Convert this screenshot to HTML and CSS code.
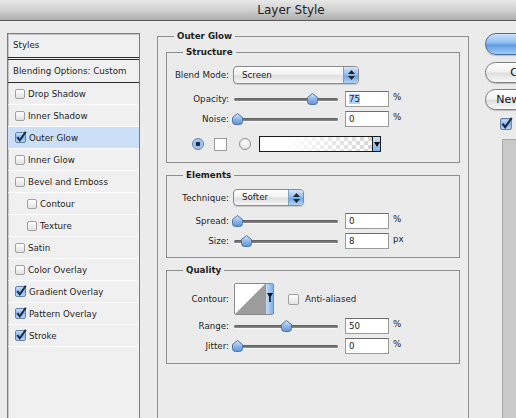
FILE: index.html
```html
<!DOCTYPE html>
<html lang="en">
<head>
    <meta charset="UTF-8">
    <title>Layer Style</title>
    <link rel="stylesheet" href="styles.css">
</head>
<body>

    <svg class="defs" width="0" height="0">
        <defs>
            <linearGradient id="thumbGrad" x1="0" y1="0" x2="0" y2="1">
                <stop offset="0" stop-color="#dbe9fa"/>
                <stop offset="0.5" stop-color="#8fb8ea"/>
                <stop offset="1" stop-color="#5d94d8"/>
            </linearGradient>
            <linearGradient id="cbOn" x1="0" y1="0" x2="0" y2="1">
                <stop offset="0" stop-color="#cfe3fa"/>
                <stop offset="0.5" stop-color="#8ab8ec"/>
                <stop offset="1" stop-color="#b9d6f6"/>
            </linearGradient>
        </defs>
    </svg>

    <div class="window">
        <div class="titlebar">Layer Style</div>

        <div class="content">
            <!-- left: list of styles -->
            <div class="styles-list">
                <div class="list-head">Styles</div>
                <div class="list-blend">Blending Options: Custom</div>
                <div class="list-item"><span class="box"></span>Drop Shadow</div>
                <div class="list-item"><span class="box"></span>Inner Shadow</div>
                <div class="list-item active">
                    <svg class="check" width="12" height="12" viewBox="0 0 12 12"><rect x=".5" y="1.5" width="10" height="10" rx="1.5" fill="url(#cbOn)" stroke="#6582a8"/><path d="M2.3 6.2 L4.8 9.4 L10.8 .8" fill="none" stroke="#1b2b47" stroke-width="2"/></svg>Outer Glow
                </div>
                <div class="list-item"><span class="box"></span>Inner Glow</div>
                <div class="list-item"><span class="box"></span>Bevel and Emboss</div>
                <div class="list-item sub"><span class="box"></span>Contour</div>
                <div class="list-item sub"><span class="box"></span>Texture</div>
                <div class="list-item"><span class="box"></span>Satin</div>
                <div class="list-item"><span class="box"></span>Color Overlay</div>
                <div class="list-item">
                    <svg class="check" width="12" height="12" viewBox="0 0 12 12"><rect x=".5" y="1.5" width="10" height="10" rx="1.5" fill="url(#cbOn)" stroke="#6582a8"/><path d="M2.3 6.2 L4.8 9.4 L10.8 .8" fill="none" stroke="#1b2b47" stroke-width="2"/></svg>Gradient Overlay
                </div>
                <div class="list-item">
                    <svg class="check" width="12" height="12" viewBox="0 0 12 12"><rect x=".5" y="1.5" width="10" height="10" rx="1.5" fill="url(#cbOn)" stroke="#6582a8"/><path d="M2.3 6.2 L4.8 9.4 L10.8 .8" fill="none" stroke="#1b2b47" stroke-width="2"/></svg>Pattern Overlay
                </div>
                <div class="list-item">
                    <svg class="check" width="12" height="12" viewBox="0 0 12 12"><rect x=".5" y="1.5" width="10" height="10" rx="1.5" fill="url(#cbOn)" stroke="#6582a8"/><path d="M2.3 6.2 L4.8 9.4 L10.8 .8" fill="none" stroke="#1b2b47" stroke-width="2"/></svg>Stroke
                </div>
            </div>

            <!-- middle: outer glow settings -->
            <div class="panel">
                <fieldset class="group outer">
                    <legend>Outer Glow</legend>

                    <fieldset class="group structure">
                        <legend>Structure</legend>
                        <div class="row tall first">
                            <span class="label">Blend Mode:</span>
                            <div class="popup blend">Screen
                                <span class="popup-arrows"><svg width="7" height="10" viewBox="0 0 7 10"><path d="M3.5 0 L7 4 H0 Z M0 6 H7 L3.5 10 Z" fill="#1d2633"/></svg></span>
                            </div>
                        </div>
                        <div class="row gap7">
                            <span class="label">Opacity:</span>
                            <div class="slider">
                                <span class="track"></span>
                                <svg class="thumb" style="left: 74px" width="11" height="12" viewBox="0 0 11 12"><path d="M5.5 .5 L10.5 4.5 V8.5 A3 3 0 0 1 7.5 11.5 H3.5 A3 3 0 0 1 .5 8.5 V4.5 Z" fill="url(#thumbGrad)" stroke="#4d74a4"/></svg>
                            </div>
                            <span class="field"><span class="selected">75</span></span>
                            <span class="unit">%</span>
                        </div>
                        <div class="row gap4">
                            <span class="label">Noise:</span>
                            <div class="slider">
                                <span class="track"></span>
                                <svg class="thumb" style="left: -1px" width="11" height="12" viewBox="0 0 11 12"><path d="M5.5 .5 L10.5 4.5 V8.5 A3 3 0 0 1 7.5 11.5 H3.5 A3 3 0 0 1 .5 8.5 V4.5 Z" fill="url(#thumbGrad)" stroke="#4d74a4"/></svg>
                            </div>
                            <span class="field">0</span>
                            <span class="unit">%</span>
                        </div>
                        <div class="row color-row">
                            <span class="radio on"></span>
                            <span class="swatch"></span>
                            <span class="radio"></span>
                            <span class="gradient">
                                <span class="gradient-fill"></span>
                                <span class="gradient-arrow"><svg width="6" height="5" viewBox="0 0 6 5"><path d="M0 0 H6 L3 5 Z" fill="#111"/></svg></span>
                            </span>
                        </div>
                    </fieldset>

                    <fieldset class="group elements">
                        <legend>Elements</legend>
                        <div class="row tall first">
                            <span class="label">Technique:</span>
                            <div class="popup technique">Softer
                                <span class="popup-arrows"><svg width="7" height="10" viewBox="0 0 7 10"><path d="M3.5 0 L7 4 H0 Z M0 6 H7 L3.5 10 Z" fill="#1d2633"/></svg></span>
                            </div>
                        </div>
                        <div class="row gap7">
                            <span class="label">Spread:</span>
                            <div class="slider">
                                <span class="track"></span>
                                <svg class="thumb" style="left: -1px" width="11" height="12" viewBox="0 0 11 12"><path d="M5.5 .5 L10.5 4.5 V8.5 A3 3 0 0 1 7.5 11.5 H3.5 A3 3 0 0 1 .5 8.5 V4.5 Z" fill="url(#thumbGrad)" stroke="#4d74a4"/></svg>
                            </div>
                            <span class="field">0</span>
                            <span class="unit">%</span>
                        </div>
                        <div class="row gap4">
                            <span class="label">Size:</span>
                            <div class="slider">
                                <span class="track"></span>
                                <svg class="thumb" style="left: 8px" width="11" height="12" viewBox="0 0 11 12"><path d="M5.5 .5 L10.5 4.5 V8.5 A3 3 0 0 1 7.5 11.5 H3.5 A3 3 0 0 1 .5 8.5 V4.5 Z" fill="url(#thumbGrad)" stroke="#4d74a4"/></svg>
                            </div>
                            <span class="field">8</span>
                            <span class="unit">px</span>
                        </div>
                    </fieldset>

                    <fieldset class="group quality">
                        <legend>Quality</legend>
                        <div class="row contour-row">
                            <span class="label">Contour:</span>
                            <span class="contour">
                                <svg class="contour-curve" width="30" height="30" viewBox="0 0 30 30"><rect width="30" height="30" fill="#fff"/><path d="M0 30 L30 0 V30 Z" fill="#9c9c9c"/></svg>
                                <span class="contour-arrow"><svg width="6" height="9" viewBox="0 0 6 9"><path d="M0 0 H6 L3 5 Z M2.2 3 H3.8 V9 H2.2 Z" fill="#111"/></svg></span>
                            </span>
                            <span class="box anti"></span>
                            <span class="anti-label">Anti-aliased</span>
                        </div>
                        <div class="row gap3">
                            <span class="label">Range:</span>
                            <div class="slider">
                                <span class="track"></span>
                                <svg class="thumb" style="left: 48px" width="11" height="12" viewBox="0 0 11 12"><path d="M5.5 .5 L10.5 4.5 V8.5 A3 3 0 0 1 7.5 11.5 H3.5 A3 3 0 0 1 .5 8.5 V4.5 Z" fill="url(#thumbGrad)" stroke="#4d74a4"/></svg>
                            </div>
                            <span class="field">50</span>
                            <span class="unit">%</span>
                        </div>
                        <div class="row gap4">
                            <span class="label">Jitter:</span>
                            <div class="slider">
                                <span class="track"></span>
                                <svg class="thumb" style="left: -1px" width="11" height="12" viewBox="0 0 11 12"><path d="M5.5 .5 L10.5 4.5 V8.5 A3 3 0 0 1 7.5 11.5 H3.5 A3 3 0 0 1 .5 8.5 V4.5 Z" fill="url(#thumbGrad)" stroke="#4d74a4"/></svg>
                            </div>
                            <span class="field">0</span>
                            <span class="unit">%</span>
                        </div>
                    </fieldset>
                </fieldset>
            </div>

            <!-- right: buttons and preview -->
            <div class="actions">
                <button class="btn default">OK</button>
                <button class="btn cancel">Cancel</button>
                <button class="btn new-style">New Style...</button>
                <div class="preview-row">
                    <svg class="check" width="13" height="13" viewBox="0 0 12 12"><rect x=".5" y="1.5" width="10" height="10" rx="1.5" fill="url(#cbOn)" stroke="#6582a8"/><path d="M2.3 6.2 L4.8 9.4 L10.8 .8" fill="none" stroke="#1b2b47" stroke-width="2"/></svg>
                    <span>Preview</span>
                </div>
                <div class="preview-box"></div>
            </div>
        </div>
    </div>

</body>
</html>
```

FILE: styles.css
```css
* {
    box-sizing: border-box;
}
body {
    margin: 0;
    background: #ebebeb;
    font-family: "DejaVu Sans", sans-serif;
    font-size: 8.7px;
    color: #1e1e1e;
    overflow: hidden;
}
.defs {
    position: absolute;
}
.window {
    width: 582px;
    height: 418px;
}
.titlebar {
    height: 21px;
    background: linear-gradient(#e8e8e8, #cdcdcd 55%, #adadad);
    border-bottom: 1px solid #575757;
    text-align: center;
    font-size: 12px;
    line-height: 20px;
    color: #222;
}
.content {
    display: flex;
    align-items: flex-start;
}

/* styles list */
.styles-list {
    flex: none;
    width: 133px;
    height: 400px;
    margin: 12px 0 0 7px;
    background: #f0f0f0;
    border: 1px solid #7d7d7d;
    box-shadow: inset 1px 1px 0 #c6c6c6;
    white-space: nowrap;
}
.list-head {
    height: 26px;
    line-height: 23px;
    padding-left: 5px;
    border-bottom: 3px double #2b2b2b;
}
.list-blend {
    height: 23px;
    line-height: 22px;
    padding-left: 5px;
    border-bottom: 1px solid #2b2b2b;
}
.list-item {
    height: 22px;
    display: flex;
    align-items: center;
    gap: 3px;
    padding-left: 7px;
    border-bottom: 1px solid #fbfbfb;
}
.list-item.sub {
    padding-left: 19px;
}
.list-item.active {
    background: #cadff7;
}
.list-item .check {
    margin-top: -2px;
    margin-right: -1px;
}
.box {
    flex: none;
    width: 10px;
    height: 10px;
    border: 1px solid #a0a0a0;
    border-radius: 2px;
    background: linear-gradient(#ffffff, #e2e2e2);
}

/* settings panel */
.panel {
    flex: none;
    width: 312px;
    margin: 9px 0 0 17px;
}
.group {
    margin: 0;
    padding: 0 8px;
    border: 1px solid #8e8e8e;
    min-width: 0;
}
.group legend {
    margin-left: 8px;
    padding: 0 3px;
    font-weight: bold;
    line-height: 12px;
}
.outer {
    height: 400px;
}
.structure {
    margin-top: 4px;
    padding-bottom: 10px;
}
.elements {
    margin-top: 6px;
    padding-bottom: 8px;
}
.quality {
    margin-top: 6px;
    padding-bottom: 9px;
}
.row {
    display: flex;
    align-items: center;
    height: 16px;
    white-space: nowrap;
}
.row.first {
    margin-top: 8px;
}
.row.tall {
    height: 18px;
}
.elements .row.tall {
    height: 17px;
}
.gap3 {
    margin-top: 3px;
}
.gap4 {
    margin-top: 4px;
}
.gap7 {
    margin-top: 7px;
}
.label {
    flex: none;
    width: 54px;
    margin-right: 4px;
    display: flex;
    justify-content: flex-end;
}

/* popup menus */
.popup {
    position: relative;
    height: 100%;
    padding-left: 8px;
    line-height: 16px;
    border: 1px solid #8a8a8a;
    border-radius: 4px;
    background: linear-gradient(#ffffff, #f1f1f1 45%, #dedede 55%, #f6f6f6);
    box-shadow: 0 1px 1px rgba(0, 0, 0, 0.15);
}
.popup.blend {
    width: 126px;
}
.popup.technique {
    width: 71px;
    line-height: 15px;
}
.popup-arrows {
    position: absolute;
    top: 0;
    right: 0;
    bottom: 0;
    width: 15px;
    display: flex;
    align-items: center;
    justify-content: center;
    border-radius: 0 3px 3px 0;
    border-left: 1px solid #7e9fc8;
    background: linear-gradient(#d3e5fa, #8fbbec 50%, #6fa5e4 55%, #b4d4f6);
}

/* sliders and fields */
.slider {
    position: relative;
    flex: none;
    width: 112px;
    height: 100%;
}
.track {
    position: absolute;
    left: 1px;
    width: 104px;
    top: 7px;
    height: 3px;
    border-radius: 2px;
    background: linear-gradient(#5b5b5b, #8c8c8c);
    box-shadow: 0 1px 0 #f8f8f8;
}
.thumb {
    position: absolute;
    top: 2px;
}
.field {
    flex: none;
    width: 44px;
    height: 16px;
    padding-left: 3px;
    line-height: 14px;
    background: #fff;
    border: 1px solid #9a9a9a;
    border-top-color: #6d6d6d;
}
.selected {
    background: #b3d4fc;
}
.unit {
    align-self: flex-start;
    margin-left: 4px;
    line-height: 12px;
}

/* color row */
.color-row {
    margin-top: 9px;
    padding-left: 17px;
}
.radio {
    flex: none;
    width: 12px;
    height: 12px;
    border: 1px solid #8f8f8f;
    border-radius: 50%;
    background: radial-gradient(circle at 50% 30%, #ffffff, #dcdcdc);
}
.radio.on {
    background: radial-gradient(circle, #1d2a3e 0 2px, #8fb9ec 2.5px, #cfe2f9);
    border-color: #5f7fa7;
}
.swatch {
    flex: none;
    width: 13px;
    height: 13px;
    margin: 0 12px 0 10px;
    background: #fff;
    border: 1px solid #9a9a9a;
}
.gradient {
    display: flex;
    width: 122px;
    height: 16px;
    margin-left: 8px;
    border: 1px solid #1a1a1a;
}
.gradient-fill {
    flex: 1;
    background: linear-gradient(to right, #fff 20%, rgba(255, 255, 255, 0)),
        repeating-conic-gradient(#d6d6d6 0 25%, #fff 0 50%) 0 0 / 8px 8px;
}
.gradient-arrow {
    width: 8px;
    display: flex;
    align-items: center;
    justify-content: center;
    border-left: 1px solid #1a1a1a;
    background: linear-gradient(#cfe2f9, #7fb0e8);
}

/* contour row */
.contour-row {
    height: 32px;
    margin-top: 7px;
}
.contour-row .label {
    margin-right: 5px;
}
.contour {
    display: flex;
    width: 40px;
    height: 32px;
    border: 1px solid #8a8a8a;
    border-radius: 2px;
}
.contour-curve {
    display: block;
}
.contour-arrow {
    flex: 1;
    display: flex;
    justify-content: center;
    padding-top: 9px;
    border-left: 1px solid #7e9fc8;
    background: linear-gradient(to right, #c3dbf7, #7fb0e8);
}
.box.anti {
    width: 11px;
    height: 11px;
    margin: 0 6px 0 14px;
}

/* buttons */
.actions {
    flex: none;
    width: 90px;
    margin: 12px 0 0 16px;
    display: flex;
    flex-direction: column;
    align-items: flex-start;
}
.btn {
    width: 88px;
    height: 21px;
    padding: 0;
    font-family: inherit;
    font-size: 11px;
    color: #111;
    border: 1px solid #7f7f7f;
    border-radius: 11px;
    background: linear-gradient(#ffffff, #f2f2f2 45%, #dfdfdf 55%, #f8f8f8);
    box-shadow: 0 1px 1px rgba(0, 0, 0, 0.2);
}
.btn.default {
    height: 22px;
    border-color: #4a6e9e;
    background: linear-gradient(#cde2fa, #8ebcef 45%, #5e9be3 55%, #a4cdf5);
}
.btn.cancel {
    margin-top: 7px;
}
.btn.new-style {
    margin-top: 6px;
}
.preview-row {
    display: flex;
    align-items: center;
    gap: 4px;
    margin: 7px 0 0 15px;
    font-size: 11px;
}
.preview-box {
    width: 70px;
    height: 300px;
    margin: 9px 0 0 17px;
    background: #c9c9c9;
    border: 1px solid #a8a8a8;
}
```
